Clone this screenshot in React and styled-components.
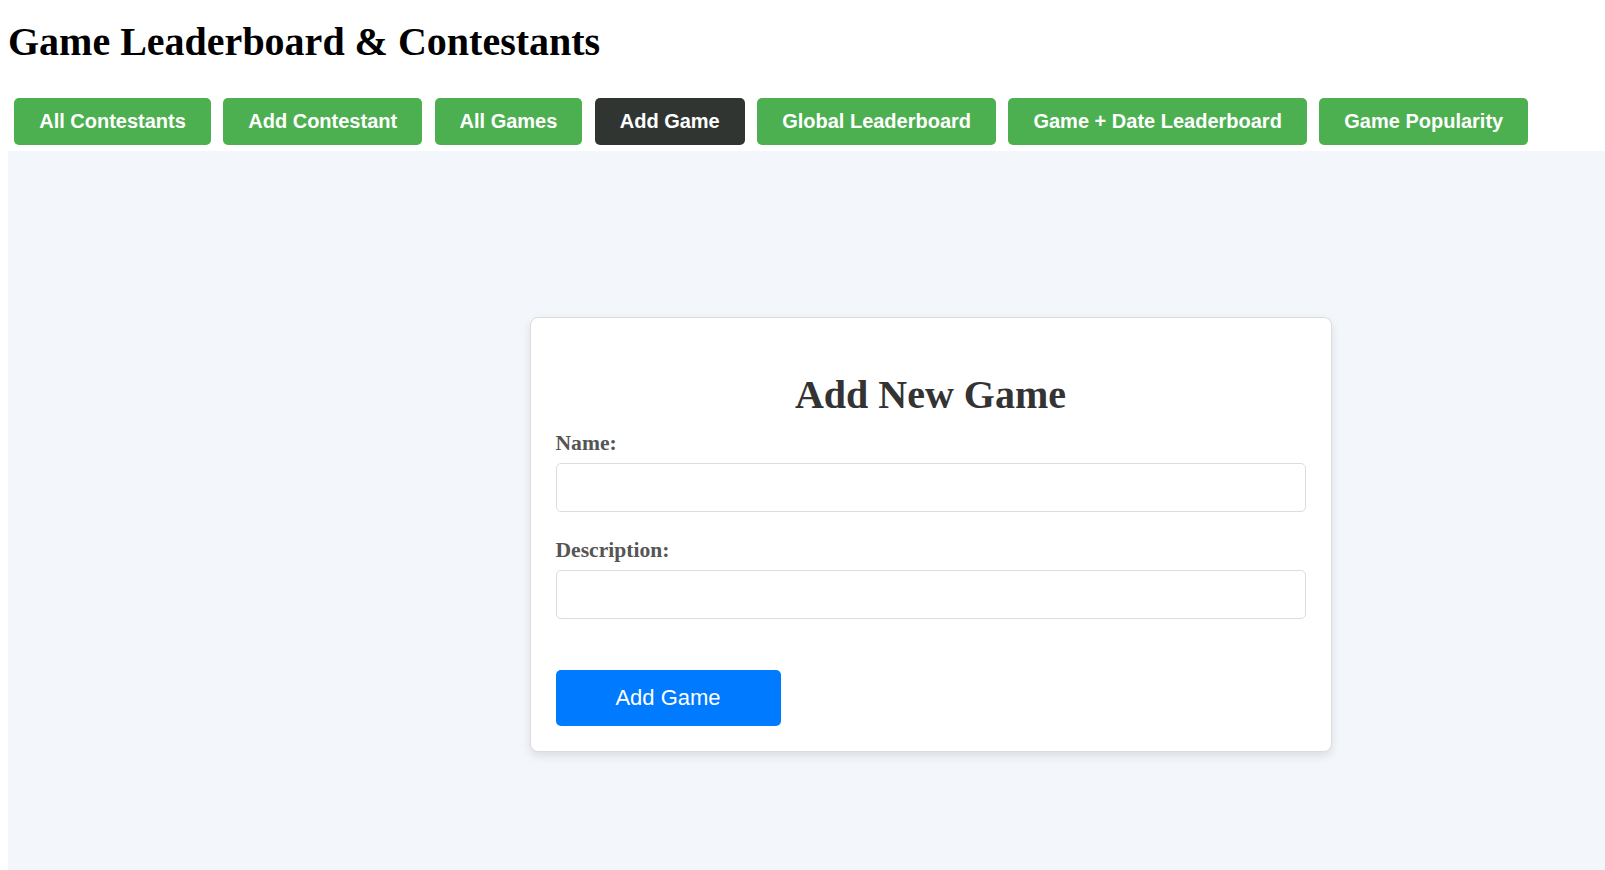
import React, { useState } from "react";
import styled, { createGlobalStyle } from "styled-components";

const GlobalStyle = createGlobalStyle`
  html, body {
    height: 100%;
    overflow: hidden;
  }
  body {
    margin: 8px 0 0 8px;
    font-family: "Liberation Serif", "Times New Roman", serif;
    background: #fff;
  }
  #root {
    height: 100%;
  }
`;

const tabs = [
  "All Contestants",
  "Add Contestant",
  "All Games",
  "Add Game",
  "Global Leaderboard",
  "Game + Date Leaderboard",
  "Game Popularity",
];

const App = () => {
  const [active, setActive] = useState("Add Game");

  return (
    <Page>
      <GlobalStyle />
      <Title>Game Leaderboard &amp; Contestants</Title>
      <Nav>
        {tabs.map((tab) => (
          <NavButton
            key={tab}
            $active={tab === active}
            onClick={() => setActive(tab)}
          >
            {tab}
          </NavButton>
        ))}
      </Nav>
      <Main>
        <FormCard onSubmit={(e) => e.preventDefault()}>
          <FormTitle>Add New Game</FormTitle>
          <FormGroup>
            <Label htmlFor="game-name">Name:</Label>
            <Input id="game-name" type="text" />
          </FormGroup>
          <FormGroup>
            <Label htmlFor="game-desc">Description:</Label>
            <Input id="game-desc" type="text" />
          </FormGroup>
          <SubmitButton type="submit">Add Game</SubmitButton>
        </FormCard>
      </Main>
    </Page>
  );
};

export default App;

const Page = styled.div`
  display: flex;
  flex-direction: column;
  height: calc(100vh - 8px);
`;

const Title = styled.h1`
  font-size: 40px;
  font-weight: bold;
  color: #000;
  margin: 10px 0 26.8px;
`;

const Nav = styled.nav`
  display: flex;
  flex-wrap: wrap;
`;

const NavButton = styled.button`
  margin: 6px 6.2px;
  padding: 12px 25px;
  border: none;
  border-radius: 5px;
  background: ${(p) => (p.$active ? "#313532" : "#4caf50")};
  color: #fff;
  font-family: "Liberation Sans", Arial, sans-serif;
  font-size: 20px;
  font-weight: bold;
  line-height: 23px;
  cursor: pointer;
`;

const Main = styled.main`
  flex: 1;
  background: #f3f6fa;
  display: flex;
  justify-content: center;
  align-items: flex-start;
  padding: 166px 0 0 248px;
`;

const FormCard = styled.form`
  width: 750px;
  padding: 25px;
  background: #fff;
  border: 1px solid #dcdcdc;
  border-radius: 8px;
  box-shadow: 0 4px 10px rgba(0, 0, 0, 0.1);
`;

const FormTitle = styled.h2`
  text-align: center;
  font-size: 40px;
  font-weight: bold;
  color: #333;
  margin: 28px 0 13px;
`;

const FormGroup = styled.div`
  margin-bottom: 26px;
`;

const Label = styled.label`
  display: block;
  font-size: 21.6px;
  font-weight: bold;
  color: #555;
  margin-bottom: 7px;
`;

const Input = styled.input`
  display: block;
  width: 100%;
  height: 49px;
  box-sizing: border-box;
  padding: 12px;
  border: 1px solid #ddd;
  border-radius: 5px;
  font-family: "Liberation Sans", Arial, sans-serif;
  font-size: 16px;
`;

const SubmitButton = styled.button`
  margin-top: 25px;
  width: 225px;
  height: 56px;
  border: none;
  border-radius: 5px;
  background: #007bff;
  color: #fff;
  font-family: "Liberation Sans", Arial, sans-serif;
  font-size: 22px;
  cursor: pointer;
`;
